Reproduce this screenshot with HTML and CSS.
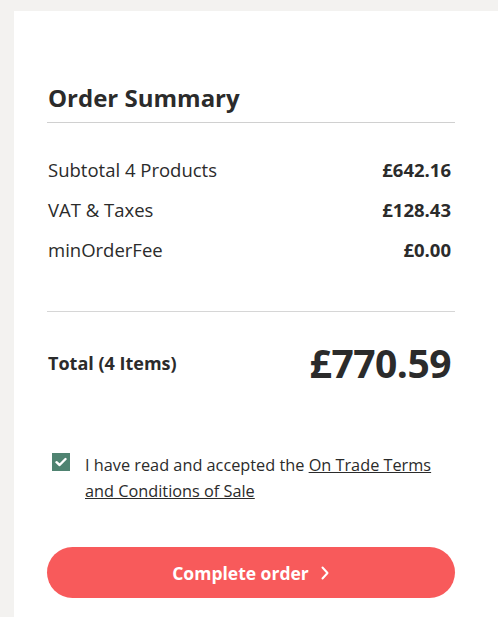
FILE: index.html
```html
<!DOCTYPE html>
<html lang="en">
<head>
<meta charset="utf-8">
<link rel="stylesheet" href="styles.css">
</head>
<body>
<div class="card">
  <h2 class="title">Order Summary</h2>
  <div class="rows">
    <div class="row"><span>Subtotal 4 Products</span><span class="val">£642.16</span></div>
    <div class="row"><span>VAT &amp; Taxes</span><span class="val">£128.43</span></div>
    <div class="row"><span>minOrderFee</span><span class="val">£0.00</span></div>
  </div>
  <div class="total">
    <span class="total-label">Total (4 Items)</span>
    <span class="total-val">£770.59</span>
  </div>
  <label class="terms">
    <span class="check"><svg width="12" height="10" viewBox="0 0 12 10"><path d="M1.5 5.2 L4.6 8 L10.5 2" fill="none" stroke="#fff" stroke-width="2.4" stroke-linecap="round" stroke-linejoin="round"/></svg></span>
    <span class="terms-text">I have read and accepted the <a href="#">On Trade Terms and Conditions of Sale</a></span>
  </label>
  <button class="btn">Complete order <svg width="10" height="14" viewBox="0 0 10 14"><path d="M2.5 1.5 L7.5 7 L2.5 12.5" fill="none" stroke="#fff" stroke-width="2" stroke-linecap="round" stroke-linejoin="round"/></svg></button>
</div>
</body>
</html>
```
FILE: styles.css
```css
html, body { margin: 0; padding: 0; }
body {
  background: #f3f2f0;
  font-family: "Open Sans", Lato, sans-serif;
  color: #2b2b2b;
  padding: 11px 0 0 14px;
}
.card {
  background: #fff;
  padding: 72px 43px 40px 33px;
  min-height: 600px;
}
.title {
  margin: 0;
  font-size: 24px;
  font-weight: 700;
  line-height: 30px;
  padding: 0 0 9px 1px;
  border-bottom: 1px solid #d0d0d0;
}
.rows {
  padding: 36px 4px 50px 1px;
  border-bottom: 1px solid #d6d6d6;
  display: flex;
  flex-direction: column;
  gap: 18px;
}
.row {
  display: flex;
  justify-content: space-between;
  font-size: 18.5px;
  line-height: 22px;
}
.val { font-weight: 700; }
.total {
  display: flex;
  justify-content: space-between;
  align-items: center;
  padding: 27px 4px 0 1px;
}
.total-label { font-size: 18px; font-weight: 700; }
.total-val { font-size: 39px; font-weight: 700; line-height: 48px; letter-spacing: -0.5px; }
.terms {
  display: flex;
  align-items: flex-start;
  gap: 15px;
  margin: 65px 0 0 5px;
  font-size: 16.3px;
  line-height: 26px;
}
.check {
  flex: none;
  width: 18px;
  height: 18px;
  background: #4f8371;
  display: flex;
  align-items: center;
  justify-content: center;
  margin-top: 1px;
}
.terms a { color: #2b2b2b; text-decoration: underline; }
.btn {
  margin-top: 43px;
  width: 100%;
  height: 51px;
  border: 0;
  border-radius: 26px;
  background: #f85a5b;
  color: #fff;
  font-family: "Open Sans", Lato, sans-serif;
  font-size: 17.5px;
  font-weight: 700;
  display: flex;
  align-items: center;
  justify-content: center;
  gap: 11px;
}
```
